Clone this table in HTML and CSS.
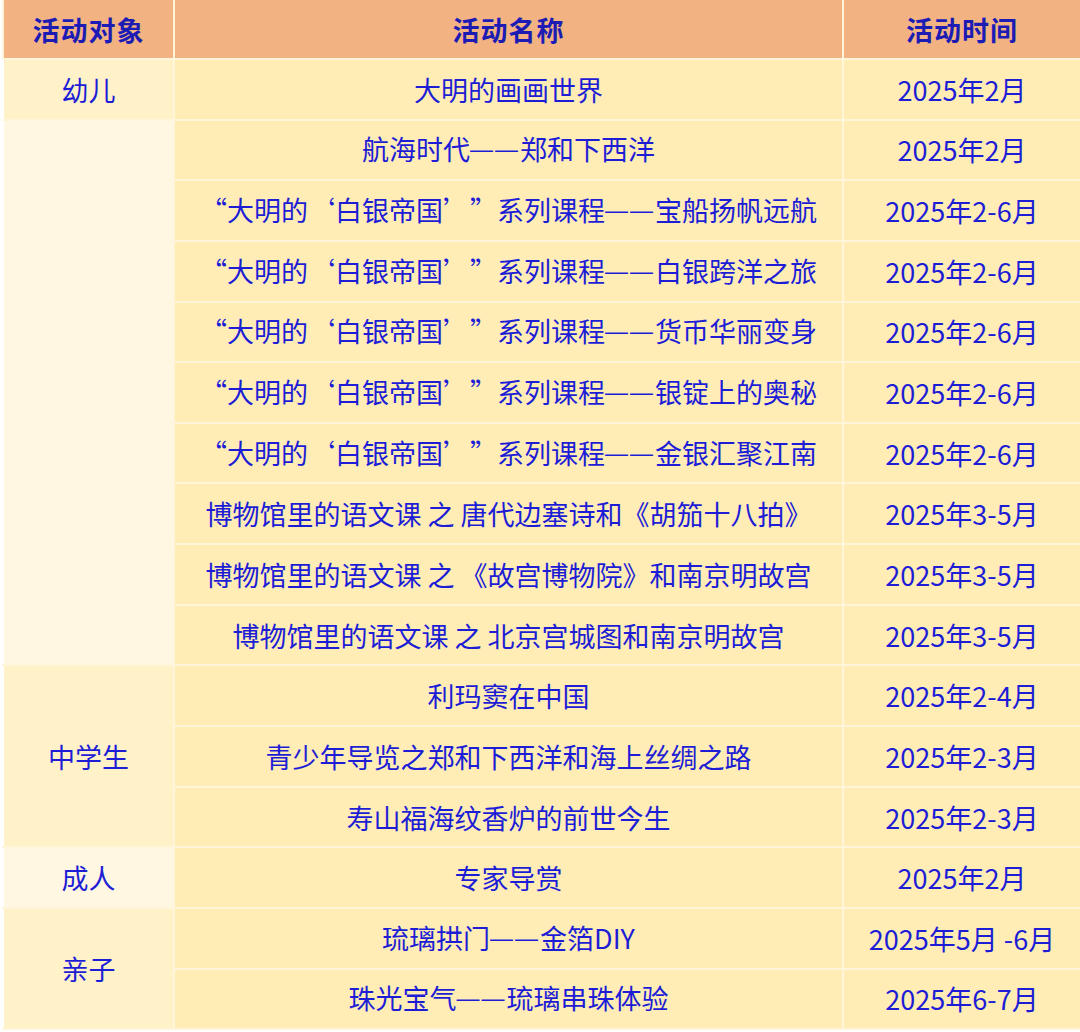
FILE: index.html
```html
<!DOCTYPE html>
<html lang="zh-CN">
<head>
<meta charset="utf-8">
<title>活动安排</title>
<link rel="stylesheet" href="styles.css">
</head>
<body>
<table class="sched">
  <colgroup>
    <col class="c1"><col class="c2"><col class="c3">
  </colgroup>
  <thead>
    <tr><th>活动对象</th><th>活动名称</th><th>活动时间</th></tr>
  </thead>
  <tbody>
    <tr><td class="aud a">幼儿</td><td>大明的画画世界</td><td>2025年2月</td></tr>
    <tr><td class="aud b" rowspan="9"></td><td>航海时代<span class="dash">——</span>郑和下西洋</td><td>2025年2月</td></tr>
    <tr><td>“大明的‘白银帝国’”系列课程<span class="dash">——</span>宝船扬帆远航</td><td>2025年2-6月</td></tr>
    <tr><td>“大明的‘白银帝国’”系列课程<span class="dash">——</span>白银跨洋之旅</td><td>2025年2-6月</td></tr>
    <tr><td>“大明的‘白银帝国’”系列课程<span class="dash">——</span>货币华丽变身</td><td>2025年2-6月</td></tr>
    <tr><td>“大明的‘白银帝国’”系列课程<span class="dash">——</span>银锭上的奥秘</td><td>2025年2-6月</td></tr>
    <tr><td>“大明的‘白银帝国’”系列课程<span class="dash">——</span>金银汇聚江南</td><td>2025年2-6月</td></tr>
    <tr><td>博物馆里的语文课 之 唐代边塞诗和《胡笳十八拍》</td><td>2025年3-5月</td></tr>
    <tr><td>博物馆里的语文课 之 《故宫博物院》和南京明故宫</td><td>2025年3-5月</td></tr>
    <tr><td>博物馆里的语文课 之 北京宫城图和南京明故宫</td><td>2025年3-5月</td></tr>
    <tr><td class="aud a" rowspan="3">中学生</td><td>利玛窦在中国</td><td>2025年2-4月</td></tr>
    <tr><td>青少年导览之郑和下西洋和海上丝绸之路</td><td>2025年2-3月</td></tr>
    <tr><td>寿山福海纹香炉的前世今生</td><td>2025年2-3月</td></tr>
    <tr><td class="aud b">成人</td><td>专家导赏</td><td>2025年2月</td></tr>
    <tr><td class="aud a" rowspan="2">亲子</td><td>琉璃拱门<span class="dash">——</span>金箔DIY</td><td>2025年5月 -6月</td></tr>
    <tr><td>珠光宝气<span class="dash">——</span>琉璃串珠体验</td><td>2025年6-7月</td></tr>
  </tbody>
</table>
</body>
</html>
```

FILE: styles.css
```css
html, body {
  margin: 0;
  padding: 0;
  background: #ffffff;
}
body {
  font-family: "Noto Sans CJK SC", "Noto Sans", sans-serif;
  color: #1d1dd6;
  text-spacing-trim: space-all;
}
.sched {
  margin-left: 2px;
  width: 1078px;
  border-collapse: collapse;
  table-layout: fixed;
}
.sched col.c1 { width: 171px; }
.sched col.c2 { width: 669px; }
.sched col.c3 { width: 238px; }
.sched th,
.sched td {
  padding: 0;
  text-align: center;
  vertical-align: middle;
  border: 2px solid #fff5db;
  font-size: 27px;
  line-height: 1;
  white-space: nowrap;
}
.sched thead th {
  border-top: none;
  height: 58px;
  background: #f2b282;
  font-weight: 700;
  color: #1c1cb4;
  letter-spacing: 1px;
}
.sched tbody td {
  height: 58.65px;
  background: #ffedb5;
}
.sched tbody td.aud.a { background: #fff2c9; }
.sched tbody td.aud.b { background: #fff7e1; }
.sched tbody td.aud { border-left-color: #ffffff; }
.dash {
  display: inline-block;
  font-family: "Liberation Sans", sans-serif;
  font-size: 23px;
  letter-spacing: 2px;
  position: relative;
  top: -3px;
}
```
